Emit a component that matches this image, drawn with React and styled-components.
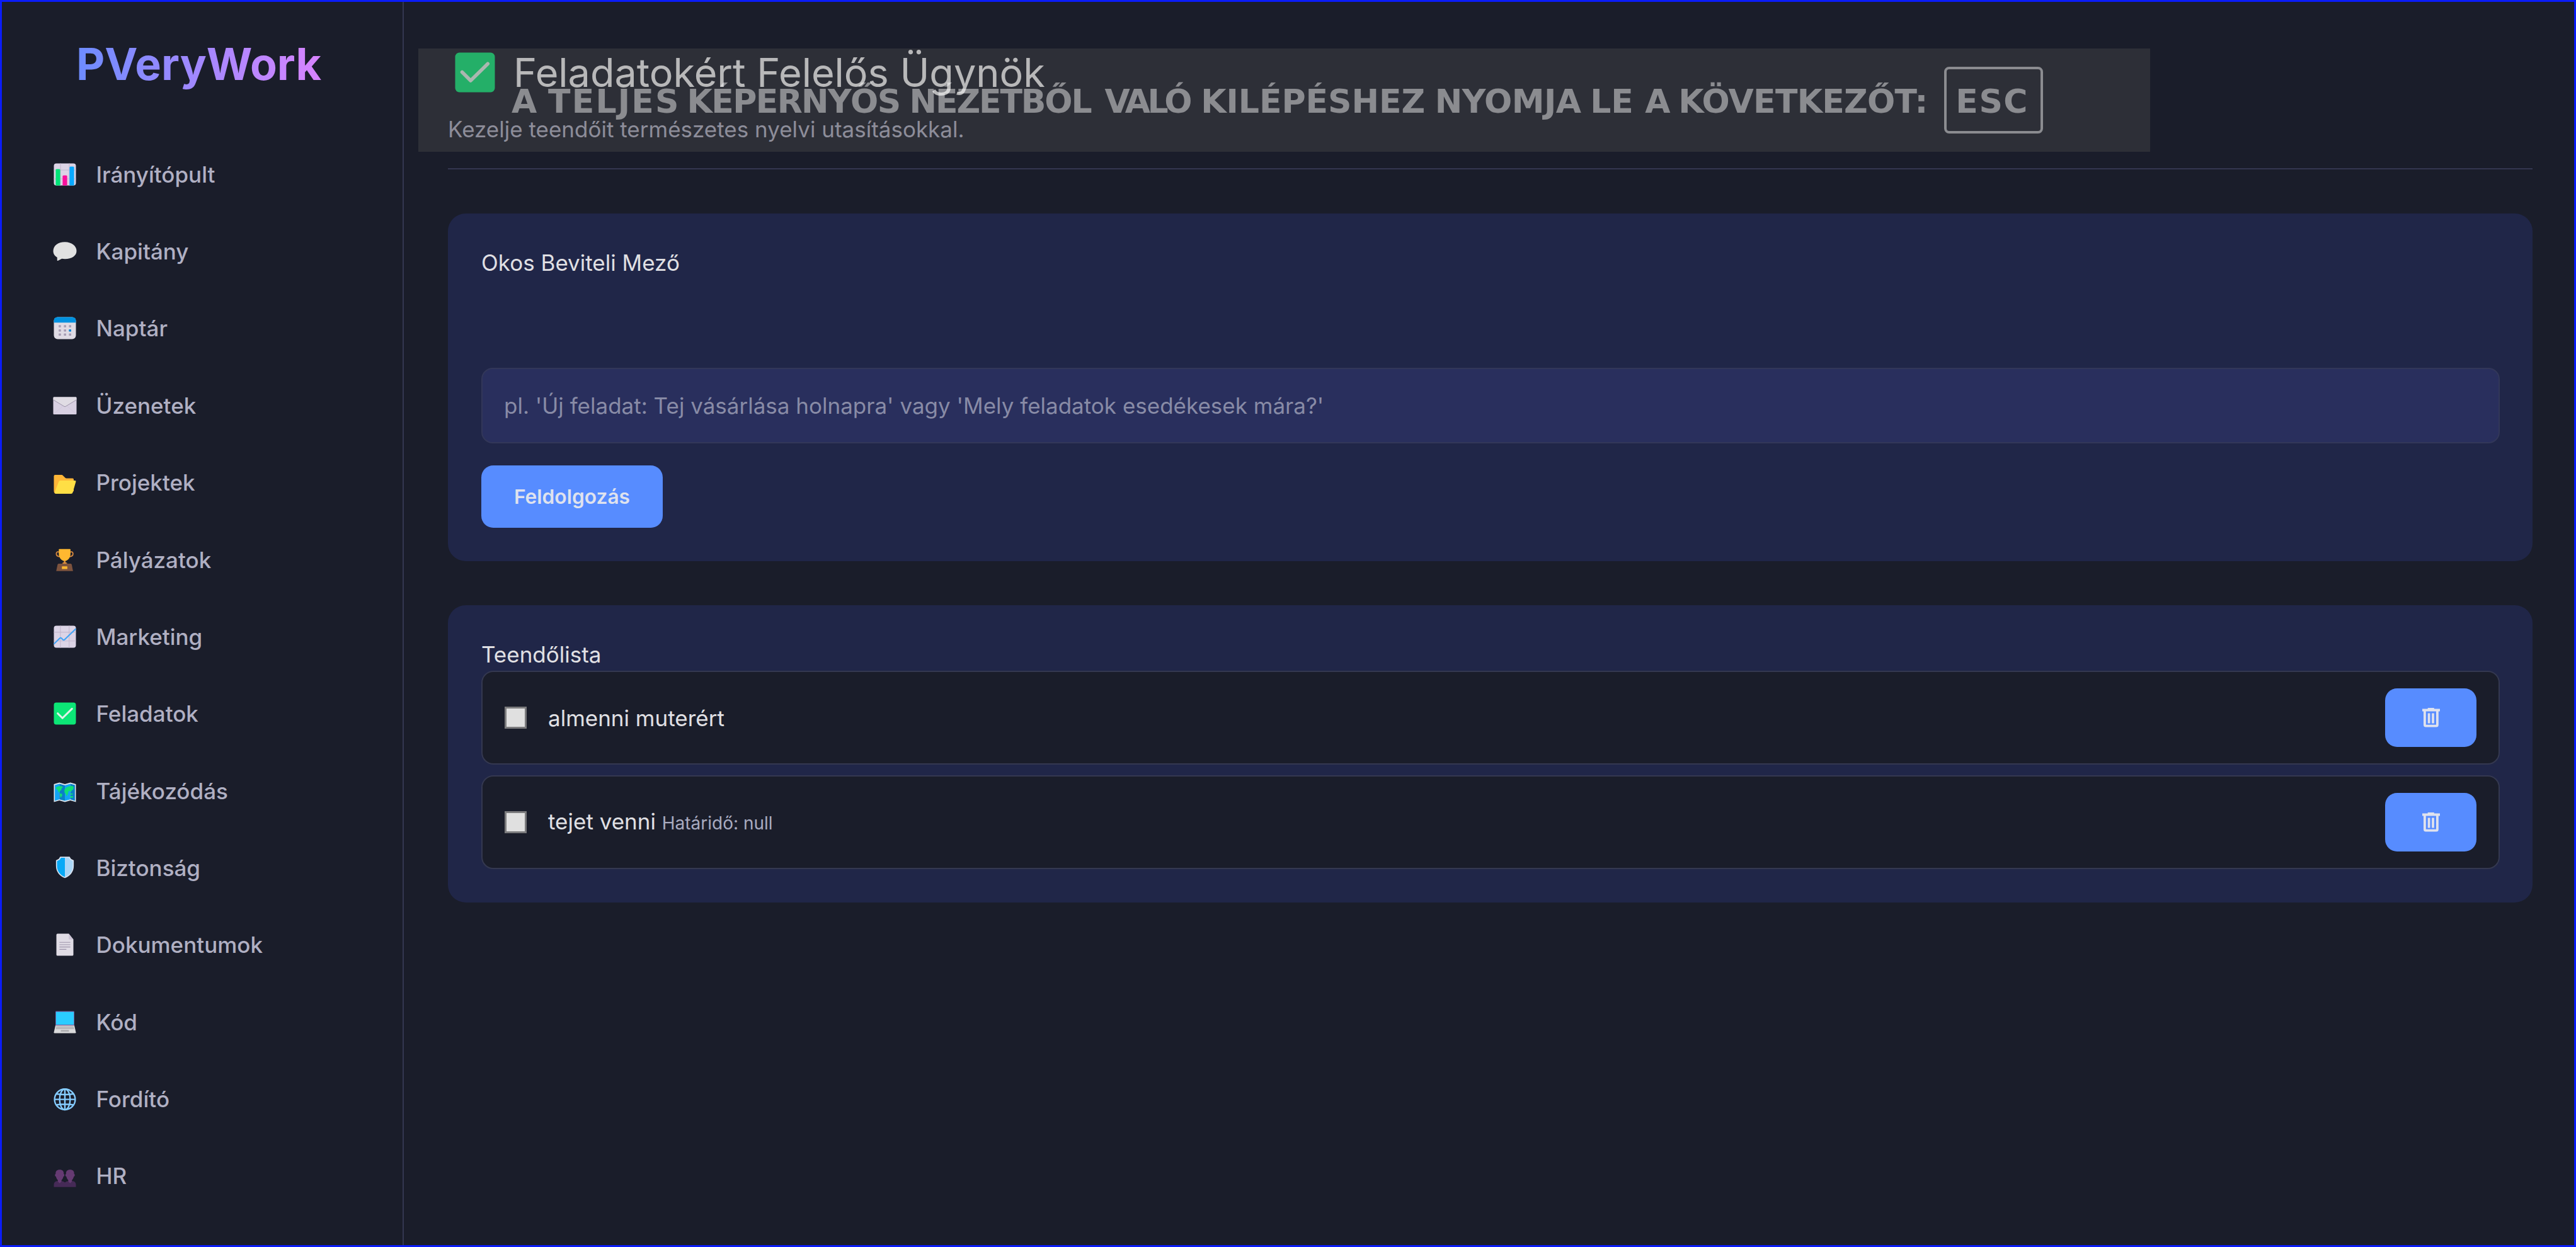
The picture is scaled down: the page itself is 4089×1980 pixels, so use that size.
import React from 'react';
import styled, { createGlobalStyle } from 'styled-components';

const GlobalStyle = createGlobalStyle`
  * { box-sizing: border-box; }
  body {
    margin: 0;
    background: #1a1d2a;
    font-family: Inter, 'Noto Sans', sans-serif;
    font-size: 35px;
    line-height: 50px;
    color: #e0e0e4;
  }
`;

const Frame = styled.div`
  display: flex;
  width: 4089px;
  height: 1980px;
  border: 3px solid #0a1cf8;
  background: #1a1d2a;
  overflow: hidden;
`;

const Sidebar = styled.aside`
  display: flex;
  flex-direction: column;
  flex: none;
  width: 638px;
  padding-top: 59px;
  border-right: 2px solid #343750;
`;

const LogoRow = styled.div`
  display: flex;
  padding-left: 118px;
  height: 80px;
  margin-bottom: 73.6px;
`;

const Logo = styled.span`
  font-size: 70px;
  font-weight: 700;
  line-height: 80px;
  color: transparent;
  background: linear-gradient(90deg, #6d8cff, #d884ff);
  -webkit-background-clip: text;
  background-clip: text;
`;

const Nav = styled.nav`
  display: flex;
  flex-direction: column;
`;

const NavItem = styled.a`
  display: flex;
  align-items: center;
  gap: 30px;
  height: 122.37px;
  padding-left: 79.5px;
  font-weight: 500;
  color: #b0b0c3;
`;

const Emoji = styled.svg`
  flex: none;
  width: ${(p) => p.$size}px;
  height: ${(p) => p.$size}px;
`;

const Main = styled.main`
  flex: 1;
  display: flex;
  flex-direction: column;
  gap: 70px;
  padding: 71px 66px 0 70px;
`;

const Header = styled.header`
  height: 195px;
  border-bottom: 2px solid #343650;
`;

const TitleRow = styled.h1`
  display: flex;
  align-items: center;
  gap: 25px;
  height: 81px;
  margin: 0;
  padding-left: 7px;
  font-size: 63px;
  line-height: 80px;
  font-weight: 400;
  letter-spacing: -0.03px;
  color: #f4f4f6;
`;

const Subtitle = styled.p`
  margin: 25px 0 0;
  color: #b0b0c3;
`;

const Card = styled.section`
  display: flex;
  flex-direction: column;
  align-items: flex-start;
  padding: 53px 52px 53px 53px;
  border-radius: 28px;
  background: #202648;
`;

const CardTitle = styled.h2`
  margin: 0 0 ${(p) => p.$gap}px;
  font-size: 35px;
  font-weight: 400;
`;

const SmartInput = styled.input`
  width: 100%;
  height: 120px;
  margin: 0 0 35px;
  padding: 0 34px;
  border: 2px solid #323759;
  border-radius: 18px;
  background: #292f5d;
  font: inherit;
  outline: none;
  &::placeholder { color: #888ba6; opacity: 1; }
`;

const Button = styled.button`
  display: flex;
  align-items: center;
  justify-content: center;
  width: ${(p) => p.$w}px;
  height: ${(p) => p.$h}px;
  padding: 0;
  border: 0;
  border-radius: 19px;
  background: #578cff;
  font: 600 31.7px/50px Inter, 'Noto Sans', sans-serif;
  color: #dfe2ee;
`;

const TaskList = styled.ul`
  display: flex;
  flex-direction: column;
  gap: 17px;
  width: 100%;
  margin: 0;
  padding: 0;
  list-style: none;
`;

const Task = styled.li`
  display: flex;
  align-items: center;
  height: 149px;
  padding: 0 35px;
  border: 2px solid #343850;
  border-radius: 19px;
  background: #1a1d2a;
`;

const Checkbox = styled.span`
  width: 35px;
  height: 35px;
  margin-right: 34px;
  border: 3px solid #7b7b7d;
  background: #e0e0e0;
`;

const TaskText = styled.span`
  flex: 1;
  white-space: pre;
`;

const Due = styled.small`
  font-size: 28px;
  color: #a9abc0;
`;

const EscBanner = styled.div`
  position: fixed;
  left: 664px;
  top: 77px;
  display: flex;
  align-items: center;
  width: 2749px;
  height: 164px;
  padding-left: 148px;
  background: rgba(79, 79, 79, 0.363);
  font: 700 52px/60px 'DejaVu Sans', sans-serif;
  color: rgba(255, 255, 255, 0.45);
`;

const Word = styled.span`
  flex: none;
  width: ${(p) => p.$w}px;
  padding-top: 4px;
  letter-spacing: ${(p) => p.$ls}px;
  white-space: nowrap;
`;

const KeyCap = styled.kbd`
  display: flex;
  align-items: center;
  justify-content: center;
  width: 157px;
  height: 106px;
  margin-left: 26px;
  padding: 4px 5px 0 0;
  border: 4px solid rgba(255, 255, 255, 0.45);
  border-radius: 8px;
  font: inherit;
  letter-spacing: 1.5px;
`;

const SheetGrid = ({ a, b }) => (
  <>
    <rect x="2" y="2" width="28" height="28" rx="3.2" fill="#dcd4e6" />
    <path d={`M${a} 2V30M${b} 2V30M2 ${a}H30M2 ${b}H30`} stroke="#c4b9cf" strokeWidth=".9" />
  </>
);

const icons = {
  bars: (
    <>
      <SheetGrid a={10.4} b={21.6} />
      <path d="M4.3 10.4q0-1.2 1.2-1.2h3.4q1.2 0 1.2 1.2V30H5q-.7-.1-.7-.5z" fill="#00e377" />
      <path d="M13.1 18.4q0-1.2 1.2-1.2h3.4q1.2 0 1.2 1.2V30h-5.8z" fill="#fa0f9c" />
      <path d="M21.9 7.2q0-1.2 1.2-1.2h3.4q1.2 0 1.2 1.2V29.6q-.4.4-1 .4h-4.8z" fill="#08a9ff" />
    </>
  ),
  bubble: (
    <path d="M16 4.2C7.2 4.2 1.2 9 1.2 15.6c0 3.6 1.9 6.4 5 8.2v3.6c0 .6.4.8.9.5l5-2.5c1.3.2 2.6.3 3.9.3 8.800 0 14.8-4.200 14.8-10.200S24.800 4.200 16 4.200z" fill="#e1e1e1" />
  ),
  calendar: (
    <>
      <rect x="2" y="2" width="28" height="28" rx="4.8" fill="#dfdbe4" />
      <path d="M2 9V6.8Q2 2 6.8 2h18.4Q30 2 30 6.8V9z" fill="#0092e0" />
      {[12.1, 17.5, 22.8].map((y, r) =>
        [8.1, 14.7, 21.1].map((x, c) => (
          <rect key={`${r}${c}`} x={x} y={y} width="2.9" height="2.8" rx=".5" fill={r === 1 && c === 2 ? '#0086d8' : '#a79db4'} />
        ))
      )}
    </>
  ),
  envelope: (
    <>
      <rect x="1.2" y="5.1" width="29.6" height="22" rx="1" fill="#d8d0e2" />
      <path d="M1.3 6.1q0-1 1-1h27.4q1 0 1 1V9L16 17.4 1.3 9z" fill="#e0dce4" />
      <path d="M1.5 8.8L15 17q1 .6 2 0l13.5-8.2" fill="none" stroke="#958ca2" strokeWidth=".7" />
      <path d="M2 26.5L13.5 16.5M30 26.5L18.5 16.5" stroke="#ccc2d9" strokeWidth=".5" />
    </>
  ),
  folder: (
    <>
      <path d="M2 8q0-1.6 1.6-1.6h8.2q1 0 1.7.7l3 3q.6.6 1.4.6h7.9q1.4 0 1.4 1.4V27l-5 3.4H5.5Q2 30.4 2 27z" fill="#ffb637" />
      <path d="M8.2 15q.5-1.4 2-1.4h18.6q1.6 0 1.1 1.5l-4 13.9q-.4 1.4-1.9 1.4H5.2Q2.4 30.4 3.3 27.8z" fill="#ffdf45" />
    </>
  ),
  trophy: (
    <>
      <path d="M9.5 6.8C7 4.6 5.1 6 5.1 8.2c0 2.4 2 3.8 5.6 3.8M21.9 6.8c2.5-2.2 4.4-.8 4.4 1.4 0 2.4-2 3.8-5.6 3.8" fill="none" stroke="#d6883f" strokeWidth="1.5" />
      <path d="M13.7 20.8q1.4-1.3 1.2-4.5h1.7q-.2 3.2 1.2 4.5z" fill="#e0903c" />
      <path d="M8.3 2.8q0-.7.7-.7h13.4q.7 0 .7.7V8c0 5-3 8.3-5.6 9.1h-3.6C11.3 16.3 8.3 13 8.3 8z" fill="#ffb830" />
      <path d="M12.6 20.6q.2-1.5 1.7-1.5h3q1.5 0 1.7 1.5z" fill="#e0903c" />
      <path d="M6.7 22q.3-1.2 1.5-1.2h15q1.2 0 1.5 1.2l1.6 8.1H5z" fill="#7d533e" />
      <rect x="12.2" y="24.2" width="6.9" height="3.4" rx=".4" fill="#ffb830" />
    </>
  ),
  chart: (
    <>
      <SheetGrid a={10.3} b={21.4} />
      <path d="M2 25.3L9.4 18q1.2-1.2 2.4 0l1.5 1.6q1.2 1.2 2.4 0L30 5.8" fill="none" stroke="#3fa3f6" strokeWidth="1.6" />
    </>
  ),
  check: (
    <>
      <rect x="2" y="2" width="28" height="28" rx="3" fill="#0ce676" />
      <path d="M6.9 15.8l6 6L25 9.900" fill="none" stroke="#dff2e8" strokeWidth="2.5" strokeLinecap="round" strokeLinejoin="round" />
    </>
  ),
  map: (
    <>
      <path d="M2 7.2L9 5.2l7 2 7-2 7 2v22.8l-7-2-7 2-7-2-7 2z" fill="#dbe5ee" />
      <path d="M3.3 8.3L9 6.7v19.9l-5.7 1.7z" fill="#12a4f5" />
      <path d="M9 6.7l7 2v19.6l-7-1.7z" fill="#0a7fc8" />
      <path d="M16 8.7l7-2v19.9l-7 1.7z" fill="#12a4f5" />
      <path d="M23 6.7l5.7 1.6v20L23 26.6z" fill="#0a7fc8" />
      <path d="M4.5 11.5l3-1.5 4.2-.3 2 1.7-1.8 1-.5 2.2-2.2 1.7.5 2-2-1.3-1-2.8-2-1zM9.5 19l2.8.6.3 2-1.8 3-1-2.3zM15.5 14l1.8-2.3 3.2-1.5 5-.8 1.8 1.7-1 3.4-1.6.5-.8 2.4-1.8-1.9-1.6 1-.8 3.800-1.6 2.3-1-3-1.6-1.8zM23 19h2.8v1.5H23zM23 22.3h3.2v2.2H23z" fill="#10df78" />
    </>
  ),
  shield: (
    <>
      <path d="M10 1.8h12l1.8 2.8 3.5 1.7v7.2c0 7.4-4.6 13-11.3 15.5C9.3 26.5 4.7 20.9 4.7 13.5V6.3l3.5-1.7z" fill="#d9e2f0" />
      <path d="M16 3.2h-5L9.5 5.6 6 7.3v6.2c0 6.6 4 11.6 10 14z" fill="#08a9f6" />
      <path d="M16 3.2h5l1.5 2.4L26 7.3v6.2c0 6.6-4 11.6-10 14z" fill="#aad6f7" />
    </>
  ),
  doc: (
    <>
      <path d="M5.2 3.5Q5.2 2 6.7 2h14.2l5.9 7.4v19.1q0 1.5-1.5 1.5H6.7q-1.5 0-1.5-1.5z" fill="#e0dce5" />
      <path d="M20.9 2l5.9 7.4h-4.8q-1.1 0-1.1-1.1z" fill="#cdc5d6" />
      <path d="M9.1 13h13.8M9.1 16h13.8M9.1 18.9h13.8M9.1 21.9h8.8" stroke="#9c93aa" strokeWidth=".9" />
    </>
  ),
  laptop: (
    <>
      <path d="M4 3q0-1 1-1h22q1 0 1 1v17.5H4z" fill="#765c9d" />
      <rect x="4.7" y="2.9" width="22.6" height="16.3" fill="#2accff" />
      <path d="M4 20.2h24l2 8.8q0 1-1 1H3q-1 0-1-1z" fill="#d9d9da" />
      <path d="M5 21.4h22l.7 3.3H4.3z" fill="#aaaaad" />
      <path d="M4.8 22.5h22.5M4.6 23.7h23" stroke="#dedee0" strokeWidth=".4" />
      <path d="M11 25.900h10l.3 2.1H10.7z" fill="#aaaaad" />
    </>
  ),
  globe: (
    <g fill="none" stroke="#85ccff" strokeWidth="1.9">
      <circle cx="16" cy="16.5" r="13.1" />
      <ellipse cx="16" cy="16.5" rx="6.7" ry="13.1" />
      <path d="M16 3.5v26M3 16.5h26M5.5 9.6q10.5 1.5 21 0M5.5 23.4q10.5-1.5 21 0" />
    </g>
  ),
  people: (
    <>
      <path d="M2 30.2v-3q0-4.2 4.5-4.7h5q3 .3 4.5 1.8 1.5-1.5 4.5-1.8h5q4.5.5 4.5 4.7v3z" fill="#452a56" />
      <path d="M4.3 13.5c-.3-3.5 1.5-5.4 5.1-5.4s5.4 1.9 5.1 5.4c1.3.3 1.1 3.2-.4 3.5-.4 2-1.3 3.5-2.4 4.5v1.7l-2.3 2.2-2.3-2.2v-1.7c-1.1-1-2-2.5-2.4-4.5-1.5-.3-1.7-3.2-.4-3.5z" fill="#653a72" />
      <path d="M17.5 13.5c-.3-3.5 1.5-5.4 5.1-5.4s5.4 1.9 5.1 5.4c1.3.3 1.1 3.2-.4 3.5-.4 2-1.3 3.5-2.4 4.5v1.7l-2.3 2.2-2.3-2.2v-1.7c-1.1-1-2-2.5-2.4-4.5-1.5-.3-1.7-3.2-.4-3.5z" fill="#653a72" />
    </>
  ),
};

const Icon = ({ name, size = 40 }) => (
  <Emoji viewBox="0 0 32 32" $size={size} aria-hidden="true">
    {icons[name]}
  </Emoji>
);

const TrashSvg = styled.svg`
  width: 28px;
  height: 31px;
`;

const Trash = () => (
  <TrashSvg viewBox="0 0 28 31" fill="none" stroke="#dfe2ee">
    <path d="M0 3.5H28" strokeWidth="4" />
    <path d="M8.7 1.5H18.8" strokeWidth="3" />
    <path d="M3.9 4V27q0 1.7 1.7 1.7H22.2q1.7 0 1.7-1.7V4" strokeWidth="3.8" />
    <path d="M10.6 8.5V24.5M17 8.5V24.5" strokeWidth="3.7" />
  </TrashSvg>
);

const navItems = [
  ['bars', 'Irányítópult'],
  ['bubble', 'Kapitány'],
  ['calendar', 'Naptár'],
  ['envelope', 'Üzenetek'],
  ['folder', 'Projektek'],
  ['trophy', 'Pályázatok'],
  ['chart', 'Marketing'],
  ['check', 'Feladatok'],
  ['map', 'Tájékozódás'],
  ['shield', 'Biztonság'],
  ['doc', 'Dokumentumok'],
  ['laptop', 'Kód'],
  ['globe', 'Fordító'],
  ['people', 'HR'],
];

const tasks = [
  { text: 'almenni muterért' },
  { text: 'tejet venni', due: 'Határidő: null' },
];

const escWords = [
  ['A', 58, 0],
  ['TELJES', 220.6, 2.2],
  ['KÉPERNYŐS', 353, -1.6],
  ['NÉZETBŐL', 310, -2.1],
  ['VALÓ', 152.6, -4.5],
  ['KILÉPÉSHEZ', 371.5, 0],
  ['NYOMJA', 246.5, -0.5],
  ['LE', 87, 0],
  ['A', 53, 0],
  ['KÖVETKEZŐT:', 396, -0.7],
];

export default function App() {
  return (
    <>
      <GlobalStyle />
      <Frame>
        <Sidebar>
          <LogoRow>
            <Logo>PVeryWork</Logo>
          </LogoRow>
          <Nav>
            {navItems.map(([icon, label]) => (
              <NavItem key={label}>
                <Icon name={icon} />
                <span>{label}</span>
              </NavItem>
            ))}
          </Nav>
        </Sidebar>
        <Main>
          <Header>
            <TitleRow>
              <Icon name="check" size={72} />
              <span>Feladatokért Felelős Ügynök</span>
            </TitleRow>
            <Subtitle>Kezelje teendőit természetes nyelvi utasításokkal.</Subtitle>
          </Header>
          <Card>
            <CardTitle $gap={142}>Okos Beviteli Mező</CardTitle>
            <SmartInput placeholder="pl. 'Új feladat: Tej vásárlása holnapra' vagy 'Mely feladatok esedékesek mára?'" />
            <Button $w={288} $h={99}>Feldolgozás</Button>
          </Card>
          <Card>
            <CardTitle $gap={1}>Teendőlista</CardTitle>
            <TaskList>
              {tasks.map((t) => (
                <Task key={t.text}>
                  <Checkbox />
                  <TaskText>
                    {t.text}
                    {t.due && <> <Due>{t.due}</Due></>}
                  </TaskText>
                  <Button $w={145} $h={93} aria-label="Törlés">
                    <Trash />
                  </Button>
                </Task>
              ))}
            </TaskList>
          </Card>
        </Main>
      </Frame>
      <EscBanner>
        {escWords.map(([w, width, ls], i) => (
          <Word key={i} $w={width} $ls={ls}>{w} </Word>
        ))}
        <KeyCap>ESC</KeyCap>
      </EscBanner>
    </>
  );
}
